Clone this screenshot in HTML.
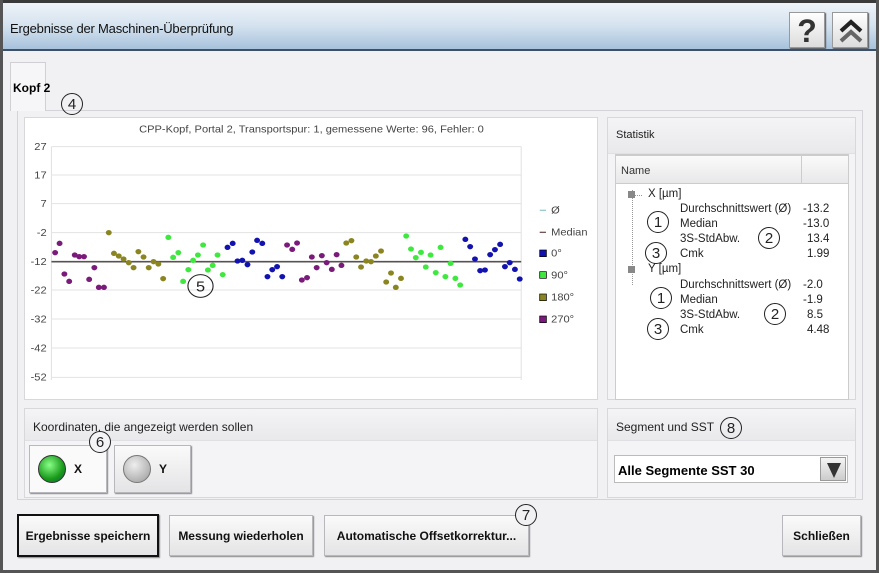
<!DOCTYPE html>
<html><head><meta charset="utf-8"><style>
*{box-sizing:border-box;margin:0;padding:0}
body{width:879px;height:573px;overflow:hidden;background:#f1f1f4;font-family:"Liberation Sans",sans-serif;position:relative}
.a{position:absolute}
.n{font-family:"Liberation Sans Narrow","Liberation Sans",sans-serif}
.btn{position:absolute;background:linear-gradient(#fafafa,#e4e4e6);border:1px solid #b8b8bc;box-shadow:1px 1px 1px #888;font-size:12px;font-weight:bold;display:flex;align-items:center;justify-content:center;color:#111}
.circ{position:absolute;width:22px;height:22px;border:1px solid #222;border-radius:50%;font-size:15px;display:flex;align-items:center;justify-content:center;color:#222;background:transparent}
.panel{position:absolute;background:#fbfbfc;border:1px solid #d8d8dc}
.hdr{position:absolute;background:linear-gradient(#f4f4f6,#e9e9ec);border-bottom:1px solid #e0e0e4;font-size:12px;color:#222}
</style></head><body>
<div class="a" style="left:0;top:0;width:879px;height:3px;background:#3a3a3a"></div>
<div class="a" style="left:0;top:0;width:3px;height:573px;background:#555"></div>
<div class="a" style="left:876px;top:0;width:3px;height:573px;background:#555"></div>
<div class="a" style="left:0;top:570px;width:879px;height:3px;background:#555"></div>
<div class="a" style="left:3px;top:3px;width:873px;height:48px;background:linear-gradient(#eef3f8,#d4e2ef 50%,#a7c2dc);border-bottom:2px solid #3c5068"></div>
<div class="a n" style="left:10px;top:21px;font-size:13px;color:#111;letter-spacing:-0.2px">Ergebnisse der Maschinen-Überprüfung</div>
<div class="a" style="left:789px;top:12px;width:36px;height:36px;background:linear-gradient(#fff,#ddd);border:1px solid #999;box-shadow:1px 1px 1px #555;font-size:32px;font-weight:bold;text-align:center;line-height:36px;color:#333">?</div>
<div class="a" style="left:832px;top:12px;width:36px;height:36px;background:linear-gradient(#fff,#ddd);border:1px solid #999;box-shadow:1px 1px 1px #555">
<svg width="36" height="36"><path d="M8 18 L18 9 L28 18" stroke="#222" stroke-width="4" fill="none"/><path d="M8 28 L18 19 L28 28" stroke="#666" stroke-width="4" fill="none"/></svg></div>

<div class="a" style="left:17px;top:110px;width:846px;height:390px;border:1px solid #d4d4d8;background:#f1f1f4"></div>
<div class="a" style="left:10px;top:62px;width:36px;height:49px;background:#f6f6f8;border:1px solid #d0d0d4;border-bottom:none"></div>
<div class="a n" style="left:13px;top:81px;font-size:12px;font-weight:bold">Kopf 2</div>
<div class="circ" style="left:61px;top:93px">4</div>

<div class="panel" style="left:24px;top:117px;width:574px;height:283px;background:#fff">
<svg class="a" style="left:-5px;top:2px" width="580" height="280" viewBox="0 0 1568 840" preserveAspectRatio="none" font-family="Liberation Sans,sans-serif">
<text x="788" y="38" font-size="30" text-anchor="middle" fill="#444">CPP-Kopf, Portal 2, Transportspur: 1, gemessene Werte: 96, Fehler: 0</text>
<g stroke="#e3e3e3" stroke-width="3"><line x1="85" x2="1355" y1="80" y2="80"/><line x1="85" x2="1355" y1="165" y2="165"/><line x1="85" x2="1355" y1="251" y2="251"/><line x1="85" x2="1355" y1="338" y2="338"/><line x1="85" x2="1355" y1="510" y2="510"/><line x1="85" x2="1355" y1="597" y2="597"/><line x1="85" x2="1355" y1="684" y2="684"/><line x1="85" x2="1355" y1="772" y2="772"/><line x1="85" x2="85" y1="80" y2="780"/><line x1="1355" x2="1355" y1="80" y2="780"/></g>
<g font-size="30" fill="#444" text-anchor="end"><text x="72" y="90">27</text><text x="72" y="175">17</text><text x="72" y="261">7</text><text x="72" y="348">-2</text><text x="72" y="435">-12</text><text x="72" y="520">-22</text><text x="72" y="607">-32</text><text x="72" y="694">-42</text><text x="72" y="782">-52</text></g>
<line x1="85" x2="1355" y1="425" y2="425" stroke="#5a5050" stroke-width="5"/>
<g fill="#7a1a7a"><circle cx="95" cy="398" r="8"/><circle cx="107" cy="370" r="8"/><circle cx="120" cy="462" r="8"/><circle cx="133" cy="484" r="8"/><circle cx="148" cy="405" r="8"/><circle cx="160" cy="410" r="8"/><circle cx="173" cy="410" r="8"/><circle cx="187" cy="478" r="8"/><circle cx="201" cy="443" r="8"/><circle cx="213" cy="502" r="8"/><circle cx="227" cy="502" r="8"/>
<circle cx="722" cy="375" r="8"/><circle cx="736" cy="388" r="8"/><circle cx="749" cy="369" r="8"/><circle cx="762" cy="480" r="8"/><circle cx="776" cy="473" r="8"/><circle cx="789" cy="411" r="8"/><circle cx="802" cy="443" r="8"/><circle cx="816" cy="407" r="8"/><circle cx="829" cy="428" r="8"/><circle cx="843" cy="448" r="8"/><circle cx="856" cy="404" r="8"/><circle cx="869" cy="436" r="8"/></g>
<g fill="#8a8520"><circle cx="240" cy="338" r="8"/><circle cx="254" cy="400" r="8"/><circle cx="267" cy="408" r="8"/><circle cx="280" cy="417" r="8"/><circle cx="294" cy="428" r="8"/><circle cx="307" cy="443" r="8"/><circle cx="320" cy="395" r="8"/><circle cx="334" cy="411" r="8"/><circle cx="348" cy="443" r="8"/><circle cx="361" cy="425" r="8"/><circle cx="374" cy="432" r="8"/><circle cx="387" cy="476" r="8"/>
<circle cx="882" cy="369" r="8"/><circle cx="896" cy="362" r="8"/><circle cx="909" cy="411" r="8"/><circle cx="922" cy="441" r="8"/><circle cx="936" cy="423" r="8"/><circle cx="949" cy="425" r="8"/><circle cx="962" cy="408" r="8"/><circle cx="976" cy="393" r="8"/><circle cx="990" cy="486" r="8"/><circle cx="1003" cy="459" r="8"/><circle cx="1016" cy="502" r="8"/><circle cx="1030" cy="475" r="8"/></g>
<g fill="#3ee83e"><circle cx="401" cy="352" r="8"/><circle cx="414" cy="412" r="8"/><circle cx="428" cy="398" r="8"/><circle cx="441" cy="484" r="8"/><circle cx="455" cy="449" r="8"/><circle cx="468" cy="421" r="8"/><circle cx="481" cy="405" r="8"/><circle cx="495" cy="375" r="8"/><circle cx="508" cy="450" r="8"/><circle cx="521" cy="436" r="8"/><circle cx="534" cy="405" r="8"/><circle cx="548" cy="464" r="8"/>
<circle cx="1044" cy="348" r="8"/><circle cx="1057" cy="387" r="8"/><circle cx="1070" cy="413" r="8"/><circle cx="1084" cy="397" r="8"/><circle cx="1097" cy="441" r="8"/><circle cx="1110" cy="405" r="8"/><circle cx="1124" cy="458" r="8"/><circle cx="1137" cy="382" r="8"/><circle cx="1150" cy="470" r="8"/><circle cx="1164" cy="430" r="8"/><circle cx="1177" cy="475" r="8"/><circle cx="1190" cy="495" r="8"/></g>
<g fill="#1212b0"><circle cx="561" cy="382" r="8"/><circle cx="575" cy="370" r="8"/><circle cx="588" cy="423" r="8"/><circle cx="601" cy="421" r="8"/><circle cx="615" cy="434" r="8"/><circle cx="628" cy="396" r="8"/><circle cx="641" cy="361" r="8"/><circle cx="655" cy="370" r="8"/><circle cx="669" cy="470" r="8"/><circle cx="682" cy="449" r="8"/><circle cx="695" cy="440" r="8"/><circle cx="709" cy="470" r="8"/>
<circle cx="1204" cy="358" r="8"/><circle cx="1217" cy="380" r="8"/><circle cx="1230" cy="417" r="8"/><circle cx="1244" cy="452" r="8"/><circle cx="1257" cy="450" r="8"/><circle cx="1271" cy="404" r="8"/><circle cx="1284" cy="389" r="8"/><circle cx="1298" cy="373" r="8"/><circle cx="1311" cy="440" r="8"/><circle cx="1324" cy="428" r="8"/><circle cx="1338" cy="448" r="8"/><circle cx="1351" cy="477" r="8"/></g>
<ellipse cx="488" cy="498" rx="34" ry="34" fill="none" stroke="#222" stroke-width="3"/><text x="488" y="514" font-size="44" text-anchor="middle" fill="#222">5</text>
<g font-size="30" fill="#444"><line x1="1405" x2="1422" y1="271" y2="271" stroke="#9cc" stroke-width="4"/><text x="1436" y="281">Ø</text>
<line x1="1405" x2="1422" y1="337" y2="337" stroke="#755" stroke-width="4"/><text x="1436" y="347">Median</text>
<rect x="1405" y="390" width="18" height="20" fill="#1212b0" stroke="#000" stroke-width="2"/><text x="1436" y="410">0°</text>
<rect x="1405" y="455" width="18" height="20" fill="#3ee83e" stroke="#000" stroke-width="2"/><text x="1436" y="475">90°</text>
<rect x="1405" y="522" width="18" height="20" fill="#8a8520" stroke="#000" stroke-width="2"/><text x="1436" y="542">180°</text>
<rect x="1405" y="588" width="18" height="20" fill="#7a1a7a" stroke="#000" stroke-width="2"/><text x="1436" y="608">270°</text></g>
</svg></div>

<div class="panel" style="left:607px;top:117px;width:249px;height:283px;background:#f4f4f6">
<div class="hdr" style="left:0;top:0;width:247px;height:36px;padding:11px 0 0 8px;font-size:11px">Statistik</div>
<div class="a" style="left:7px;top:36px;width:234px;height:246px;background:#fff;border:1px solid #ccc"></div>
<div class="a" style="left:7px;top:37px;width:234px;height:29px;background:linear-gradient(#fafafa,#e8e8ea);border:1px solid #ccc;font-size:11px;padding:9px 0 0 5px;color:#333">Name</div>
<div class="a" style="left:193px;top:37px;width:1px;height:29px;background:#ccc"></div>
<div class="a" style="left:0;top:66px;font-size:11.5px;color:#222;line-height:15px;width:249px">
<div class="a" style="left:24px;top:6px;width:1px;height:95px;border-left:1px dotted #999"></div>
<div class="a" style="left:24px;top:11px;width:10px;border-top:1px dotted #999"></div>
<div class="a" style="left:20px;top:7px;width:7px;height:7px;background:#888"></div>
<div class="a" style="left:40px;top:3px">X [µm]</div>
<div class="a" style="left:72px;top:18px">Durchschnittswert (Ø)</div><div class="a" style="left:195px;top:18px">-13.2</div>
<div class="a" style="left:72px;top:33px">Median</div><div class="a" style="left:195px;top:33px">-13.0</div>
<div class="a" style="left:72px;top:48px">3S-StdAbw.</div><div class="a" style="left:199px;top:48px">13.4</div>
<div class="a" style="left:72px;top:63px">Cmk</div><div class="a" style="left:199px;top:63px">1.99</div>
<div class="a" style="left:20px;top:82px;width:7px;height:7px;background:#888"></div>
<div class="a" style="left:40px;top:78px">Y [µm]</div>
<div class="a" style="left:72px;top:94px">Durchschnittswert (Ø)</div><div class="a" style="left:195px;top:94px">-2.0</div>
<div class="a" style="left:72px;top:109px">Median</div><div class="a" style="left:195px;top:109px">-1.9</div>
<div class="a" style="left:72px;top:124px">3S-StdAbw.</div><div class="a" style="left:199px;top:124px">8.5</div>
<div class="a" style="left:72px;top:139px">Cmk</div><div class="a" style="left:199px;top:139px">4.48</div>
</div>
</div>
<div class="circ" style="left:647px;top:211px">1</div>
<div class="circ" style="left:758px;top:227px">2</div>
<div class="circ" style="left:645px;top:242px">3</div>
<div class="circ" style="left:650px;top:287px">1</div>
<div class="circ" style="left:764px;top:303px">2</div>
<div class="circ" style="left:647px;top:318px">3</div>

<div class="panel" style="left:24px;top:408px;width:574px;height:90px;background:#f4f4f6">
<div class="hdr n" style="left:0;top:0;width:572px;height:32px;padding:11px 0 0 8px">Koordinaten, die angezeigt werden sollen</div></div>
<div class="btn n" style="left:29px;top:445px;width:78px;height:48px;background:#fafafa;justify-content:flex-start;padding-left:8px"><span style="display:inline-block;width:28px;height:28px;border-radius:50%;background:radial-gradient(circle at 40% 35%,#8f8,#1a9a1a 60%,#064);border:1px solid #333;margin-right:8px"></span>X</div>
<div class="btn n" style="left:114px;top:445px;width:77px;height:48px;justify-content:flex-start;padding-left:8px"><span style="display:inline-block;width:28px;height:28px;border-radius:50%;background:radial-gradient(circle at 40% 35%,#eee,#bbb 60%,#999);border:1px solid #777;margin-right:8px"></span>Y</div>
<div class="circ" style="left:89px;top:431px;background:#f4f4f6">6</div>

<div class="panel" style="left:607px;top:408px;width:249px;height:90px;background:#f4f4f6">
<div class="hdr n" style="left:0;top:0;width:247px;height:32px;padding:11px 0 0 8px">Segment und SST</div></div>
<div class="circ" style="left:720px;top:417px">8</div>
<div class="a n" style="left:614px;top:455px;width:234px;height:28px;background:#fff;border:1px solid #bbb;font-size:13px;font-weight:bold;padding:7px 0 0 3px">Alle Segmente SST 30</div>
<div class="a" style="left:820px;top:457px;width:26px;height:24px;background:linear-gradient(#f4f4f4,#ccc);border:1px solid #999"><svg width="26" height="24"><path d="M6 5 L20 5 L13 20 Z" fill="#333"/></svg></div>

<div class="btn n" style="left:17px;top:514px;width:142px;height:43px;border:2px solid #111">Ergebnisse speichern</div>
<div class="btn n" style="left:169px;top:515px;width:144px;height:41px">Messung wiederholen</div>
<div class="btn n" style="left:324px;top:515px;width:205px;height:41px">Automatische Offsetkorrektur...</div>
<div class="circ" style="left:515px;top:504px;background:#f1f1f4">7</div>
<div class="btn n" style="left:782px;top:515px;width:79px;height:41px">Schließen</div>
</body></html>
